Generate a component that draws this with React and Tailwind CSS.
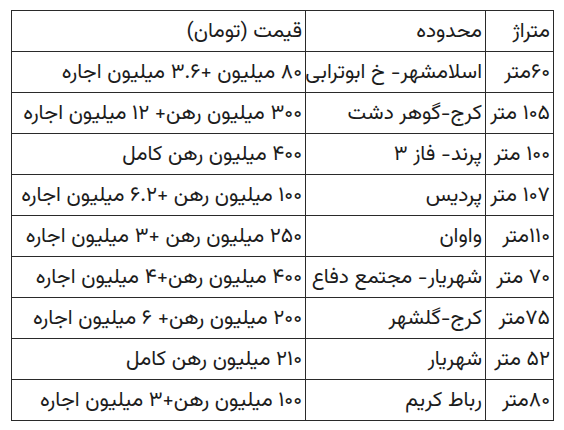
import React from "react";

const rows = [
  ["متراژ", "محدوده", "قیمت (تومان)"],
  ["۶۰متر", "اسلامشهر- خ ابوترابی", "۸۰ میلیون +۳.۶ میلیون اجاره"],
  ["۱۰۵ متر", "کرج-گوهر دشت", "۳۰۰ میلیون رهن+ ۱۲ میلیون اجاره"],
  ["۱۰۰ متر", "پرند- فاز ۳", "۴۰۰ میلیون رهن کامل"],
  ["۱۰۷ متر", "پردیس", "۱۰۰ میلیون رهن +۶.۲ میلیون اجاره"],
  ["۱۱۰متر", "واوان", "۲۵۰ میلیون رهن +۳ میلیون اجاره"],
  ["۷۰ متر", "شهریار- مجتمع دفاع", "۴۰۰ میلیون رهن+۴ میلیون اجاره"],
  ["۷۵متر", "کرج-گلشهر", "۲۰۰ میلیون رهن+ ۶ میلیون اجاره"],
  ["۵۲ متر", "شهریار", "۲۱۰ میلیون رهن کامل"],
  ["۸۰متر", "رباط کریم", "۱۰۰ میلیون رهن+۳ میلیون اجاره"],
];

export default function App() {
  return (
    <div className="w-[564px] h-[430px] bg-white pt-[10px] pl-[11px]">
      <table
        dir="rtl"
        className="w-[542px] table-fixed border-collapse text-[#1c1c1c] text-[21px] leading-none font-['Vazirmatn','Noto_Sans_Arabic','DejaVu_Sans',sans-serif]"
      >
        <colgroup>
          <col className="w-[68px]" />
          <col className="w-[180px]" />
          <col className="w-[294px]" />
        </colgroup>
        <tbody>
          {rows.map((r, i) => (
            <tr key={i} className="h-[41px]">
              {r.map((c, j) => (
                <td
                  key={j}
                  className="border border-[#2a2a2a] p-0 pr-[3px] text-right align-middle whitespace-nowrap overflow-hidden"
                >
                  {c}
                </td>
              ))}
            </tr>
          ))}
        </tbody>
      </table>
    </div>
  );
}
